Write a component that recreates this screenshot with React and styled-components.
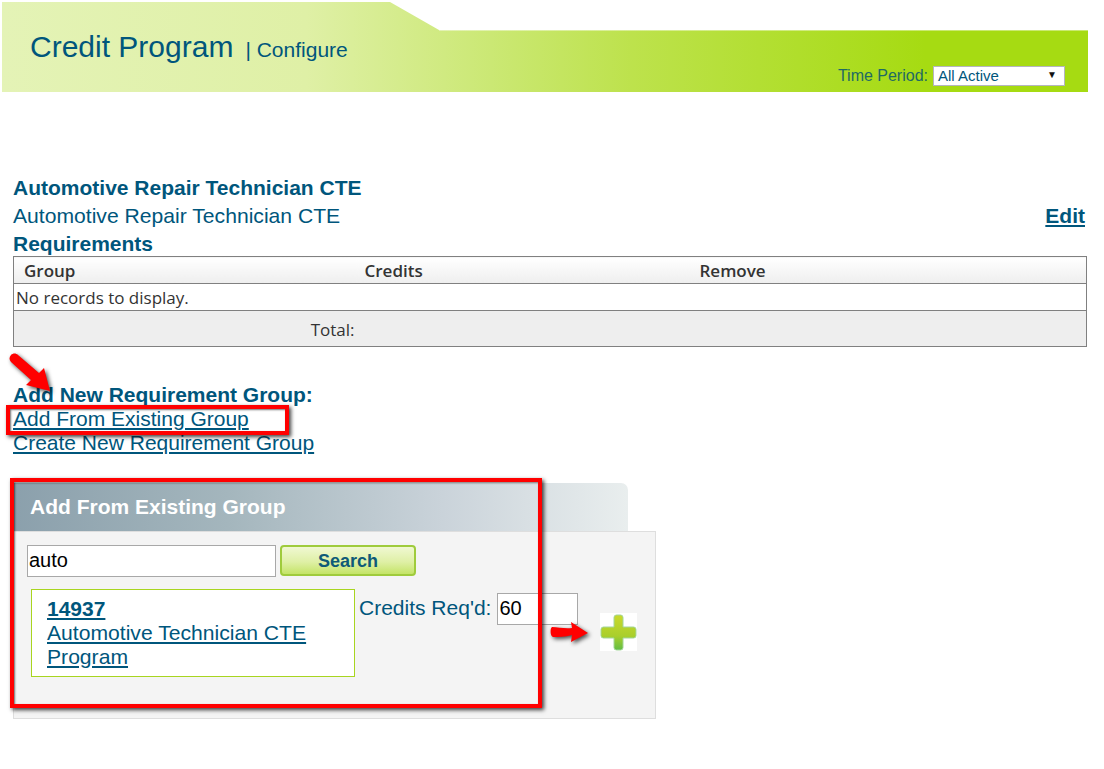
import React from "react";
import styled, { createGlobalStyle } from "styled-components";

const Global = createGlobalStyle`
  html, body { margin: 0; padding: 0; background: #fff; }
  body {
    font-family: "Liberation Sans", Arial, sans-serif;
    color: #00567c;
  }
  #root { position: relative; height: 769px; overflow: hidden; }
`;

const Header = styled.header`
  margin: 2px 0 0 2px;
  width: 1086px;
  height: 90px;
  box-sizing: border-box;
  display: flex;
  justify-content: space-between;
  padding: 0 23px 6px 28px;
  background:
    linear-gradient(rgba(255, 255, 255, 0.4), rgba(255, 255, 255, 0.4)) 437px 28px / calc(100% - 437px) 1px no-repeat,
    linear-gradient(90deg, #e4f3b6 0%, #dff0a6 28%, #cbe874 45%, #bde24c 58%, #a6db12 85%, #a6db12 100%);
  clip-path: polygon(0 0, 388px 0, 437px 28px, 100% 28px, 100% 100%, 0 100%);
`;

const TitleGroup = styled.div`
  display: flex;
  align-items: baseline;
  padding-top: 27px;
`;

const Title = styled.h1`
  margin: 0;
  font-size: 30px;
  font-weight: 400;
  line-height: 36px;
`;

const SubTitle = styled.span`
  margin-left: 12px;
  font-size: 21px;
`;

const PeriodBox = styled.div`
  align-self: flex-end;
  display: flex;
  align-items: center;
  gap: 5px;
  font-size: 16px;
  color: #1f6a63;
`;

const PeriodSelect = styled.div`
  width: 132px;
  height: 20px;
  box-sizing: border-box;
  border: 1px solid #b5b5c0;
  background: #fff;
  color: #00567c;
  font-size: 15px;
  line-height: 18px;
  padding: 0 4px;
  display: flex;
  justify-content: space-between;
`;

const Caret = styled.span`
  color: #111;
  font-size: 10px;
  line-height: 15px;
  margin-right: 3px;
`;

const Main = styled.main`
  padding: 82px 17px 0 13px;
`;

const Heading = styled.div`
  font-size: 21px;
  font-weight: 700;
  line-height: 28px;
`;

const SectionHeading = styled(Heading)`
  line-height: 24px;
`;

const DescRow = styled.div`
  display: flex;
  justify-content: space-between;
  font-size: 21.13px;
  line-height: 28px;
  padding-right: 2px;
`;

const EditLink = styled.a`
  font-size: 21px;
  font-weight: 700;
  color: inherit;
  text-decoration: underline;
`;

const Table = styled.table`
  width: 1074px;
  box-sizing: border-box;
  margin-top: -2px;
  border: 1px solid #808080;
  border-collapse: collapse;
  table-layout: fixed;
  font-family: "Open Sans", sans-serif;
  font-size: 17px;
  color: #333;
`;

const HeadCell = styled.th`
  height: 26px;
  padding: 0 0 0 10px;
  text-align: left;
  font-weight: 600;
  font-size: 17px;
  background: linear-gradient(#fff, #eee);
  border-bottom: 1px solid #808080;
`;

const EmptyCell = styled.td`
  height: 26px;
  padding: 0 0 0 2px;
  background: #fff;
  border-bottom: 1px solid #808080;
`;

const FootCell = styled.td`
  box-sizing: border-box;
  height: 36px;
  padding: ${(p) => (p.$right ? "1px 0 0 0" : "0 10px 0 0")};
  text-align: right;
  background: #eee;
`;

const AddSection = styled.section`
  margin-top: 36px;
`;

const LinkLine = styled.a`
  display: block;
  width: max-content;
  font-size: 21px;
  line-height: 24px;
  color: inherit;
  text-decoration: underline;
`;

const Tab = styled.div`
  margin-top: 28px;
  width: 615px;
  height: 48px;
  box-sizing: border-box;
  padding: 0 0 0 17px;
  display: flex;
  align-items: center;
  border-top-right-radius: 7px;
  background: linear-gradient(90deg, #8ba0ac 0%, #a4b6bd 35%, #cad3da 70%, #e9eeee 100%);
  color: #fff;
  font-size: 21px;
  font-weight: 700;
`;

const Panel = styled.div`
  position: relative;
  width: 643px;
  height: 188px;
  box-sizing: border-box;
  background: #f4f4f4;
  border: 1px solid #dedede;
  padding: 13px 13px;
`;

const SearchRow = styled.div`
  display: flex;
  gap: 4px;
`;

const TextBox = styled.div`
  box-sizing: border-box;
  width: ${(p) => p.$w}px;
  height: 32px;
  border: 1px solid #a8a8a8;
  background: #fff;
  color: #000;
  font-size: 20px;
  line-height: 29px;
  padding-left: 1px;
`;

const SearchButton = styled.button`
  width: 136px;
  height: 31px;
  box-sizing: border-box;
  border: 2px solid #9fcb3c;
  border-radius: 4px;
  background: linear-gradient(#f0f8d2, #dff0a6 55%, #c4e467);
  color: #0f5a78;
  font-family: "Liberation Sans", sans-serif;
  font-size: 18px;
  font-weight: 700;
  padding: 1px 0 0;
`;

const ResultRow = styled.div`
  display: flex;
  align-items: flex-start;
  margin: 12px 0 0 4px;
`;

const ResultBox = styled.div`
  width: 324px;
  height: 88px;
  box-sizing: border-box;
  border: 1px solid #a8d520;
  background: #fff;
  padding: 7px 15px;
  font-size: 21px;
  line-height: 24px;
`;

const ResultId = styled.a`
  display: block;
  font-weight: 700;
  color: inherit;
  text-decoration: underline;
`;

const ResultName = styled.a`
  font-size: 21.13px;
  color: inherit;
  text-decoration: underline;
`;

const CreditsLabel = styled.label`
  margin: 7px 6px 0 4px;
  font-size: 21px;
  line-height: 24px;
`;

const CreditsWrap = styled.div`
  margin-top: 4px;
`;

const AddButton = styled.div`
  width: 37px;
  height: 38px;
  margin: 24px 0 0 22px;
  background: #fff;
`;

const RedBox = styled.div`
  position: absolute;
  box-sizing: border-box;
  left: ${(p) => p.$x}px;
  top: ${(p) => p.$y}px;
  width: ${(p) => p.$w}px;
  height: ${(p) => p.$h}px;
  border: 4px solid #ff0000;
  box-shadow: 2px 2px 4px rgba(0, 0, 0, 0.75), inset 1px 1px 2px rgba(0, 0, 0, 0.55);
  pointer-events: none;
`;

const Arrow = styled.svg`
  position: absolute;
  left: ${(p) => p.$x}px;
  top: ${(p) => p.$y}px;
  overflow: visible;
  filter: drop-shadow(2px 2px 2px rgba(0, 0, 0, 0.7));
`;

const PlusIcon = () => (
  <svg width="37" height="38" viewBox="0 0 37 38">
    <defs>
      <linearGradient id="plusFill" x1="0" y1="0" x2="0" y2="1">
        <stop offset="0" stopColor="#c9d92c" />
        <stop offset="0.6" stopColor="#a9cf2c" />
        <stop offset="1" stopColor="#62bd45" />
      </linearGradient>
    </defs>
    <path
      d="M16.500 2h4a2.500 2.500 0 0 1 2.500 2.500V14h10.500a2.500 2.500 0 0 1 2.500 2.500v6a2.500 2.500 0 0 1-2.500 2.500H23v9.500a2.500 2.500 0 0 1-2.500 2.500h-4a2.500 2.500 0 0 1-2.500-2.500V25H3.500A2.500 2.500 0 0 1 1 22.500v-6A2.500 2.500 0 0 1 3.500 14H14V4.500A2.500 2.500 0 0 1 16.500 2z"
      fill="url(#plusFill)"
      stroke="#a3d69a"
    />
  </svg>
);

export default function App() {
  return (
    <>
      <Global />
      <Header>
        <TitleGroup>
          <Title>Credit Program</Title>
          <SubTitle>| Configure</SubTitle>
        </TitleGroup>
        <PeriodBox>
          Time Period:
          <PeriodSelect>
            All Active
            <Caret>▼</Caret>
          </PeriodSelect>
        </PeriodBox>
      </Header>
      <Main>
        <Heading>Automotive Repair Technician CTE</Heading>
        <DescRow>
          Automotive Repair Technician CTE
          <EditLink href="#">Edit</EditLink>
        </DescRow>
        <Heading>Requirements</Heading>
        <Table>
          <colgroup>
            <col width="341" />
            <col width="335" />
            <col />
          </colgroup>
          <thead>
            <tr>
              <HeadCell>Group</HeadCell>
              <HeadCell>Credits</HeadCell>
              <HeadCell>Remove</HeadCell>
            </tr>
          </thead>
          <tbody>
            <tr>
              <EmptyCell colSpan={3}>No records to display.</EmptyCell>
            </tr>
            <tr>
              <FootCell $right>Total:</FootCell>
              <FootCell />
              <FootCell />
            </tr>
          </tbody>
        </Table>
        <AddSection>
          <SectionHeading>Add New Requirement Group:</SectionHeading>
          <LinkLine href="#">Add From Existing Group</LinkLine>
          <LinkLine href="#">Create New Requirement Group</LinkLine>
        </AddSection>
        <Tab>Add From Existing Group</Tab>
        <Panel>
          <SearchRow>
            <TextBox $w={249}>auto</TextBox>
            <SearchButton>Search</SearchButton>
          </SearchRow>
          <ResultRow>
            <ResultBox>
              <ResultId href="#">14937</ResultId>
              <ResultName href="#">Automotive Technician CTE Program</ResultName>
            </ResultBox>
            <CreditsLabel>Credits Req'd:</CreditsLabel>
            <CreditsWrap>
              <TextBox $w={81}>60</TextBox>
            </CreditsWrap>
            <AddButton>
              <PlusIcon />
            </AddButton>
          </ResultRow>
        </Panel>
      </Main>
      <RedBox $x={6} $y={405} $w={283} $h={30} />
      <RedBox $x={10} $y={478} $w={532} $h={230} />
      <Arrow $x={7} $y={352} width="46" height="40" viewBox="0 0 46 40">
        <path d="M4 3 C2 5 2 8 4 10 L24 28 L19 33 L43 39 L37 16 L32 21 L11 3 C9 1 6 1 4 3z" fill="#ff0000" />
      </Arrow>
      <Arrow $x={549} $y={622} width="40" height="22" viewBox="0 0 40 22">
        <path d="M3 5 C1 6 1 14 4 15 C10 15 16 15 23 13 L22 20 L39 11 L22 0 L23 6 C16 7 9 5 3 5z" fill="#ff0000" />
      </Arrow>
    </>
  );
}
